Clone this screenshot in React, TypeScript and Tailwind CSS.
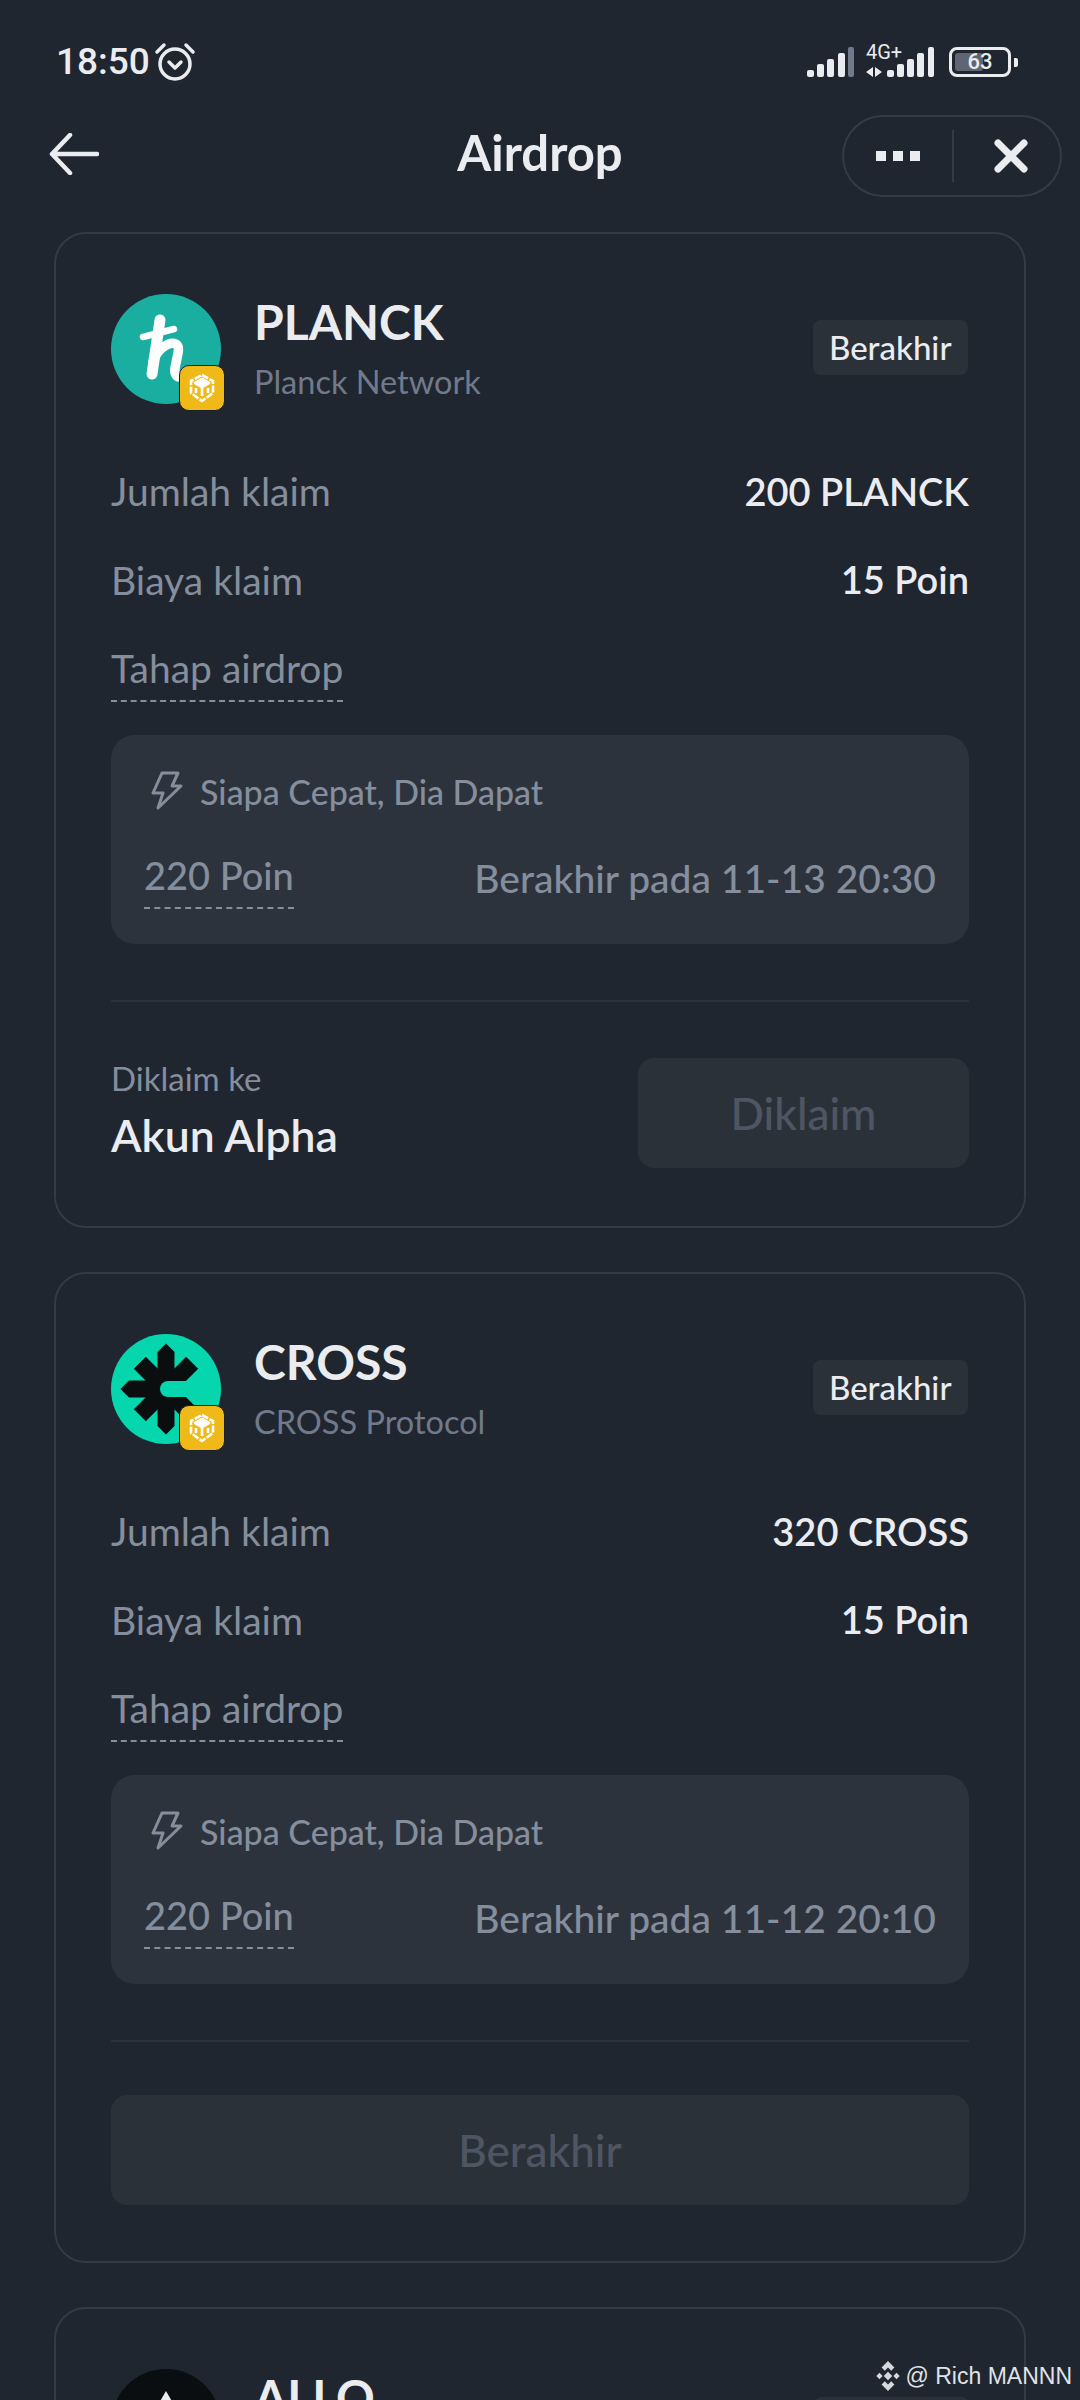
import React from "react";

function BnbBadge() {
  return (
    <div className="absolute left-[68px] top-[71px] flex h-[46px] w-[46px] items-center justify-center rounded-[10px] border border-[#1a1f27] bg-[#eeb919]">
      <svg width="28" height="30" viewBox="0 0 28 30" fill="none" stroke="#fff" strokeWidth="2.6" strokeLinejoin="round">
        <path d="M14 2 L25 8 V20 L14 28 L3 20 V8 Z" strokeDasharray="7 1.5" />
        <path d="M7 10 L14 14 L21 10 L14 6 Z" fill="#fff" />
        <path d="M14 14 V23" />
        <path d="M8 15 V20 M20 15 V20" />
      </svg>
    </div>
  );
}

function PlanckLogo() {
  return (
    <div className="relative h-[110px] w-[110px] shrink-0">
      <svg width="110" height="110" viewBox="0 0 110 110">
        <circle cx="55" cy="55" r="55" fill="#1aaea0" />
        <g fill="none" stroke="#fff" strokeLinecap="round" strokeLinejoin="round">
          <path d="M49 26 L41 80" strokeWidth="11" />
          <path d="M32 43 L63 35" strokeWidth="6.5" />
          <path d="M42 68 C46 55 58 47 65 50 C70 53 66 62 64 74 C63 81 66 84 72 83" strokeWidth="9.5" />
        </g>
      </svg>
      <BnbBadge />
    </div>
  );
}

function CrossLogo() {
  const arm = "-8.5,-37 0,-45.5 8.5,-37 8.5,0 -8.5,0";
  return (
    <div className="relative h-[110px] w-[110px] shrink-0">
      <svg width="110" height="110" viewBox="0 0 110 110">
        <circle cx="55" cy="55" r="55" fill="#06d6ae" />
        <g transform="translate(55 55)" fill="#0b0e0f">
          <polygon points={arm} />
          <polygon points={arm} transform="rotate(180)" />
          <polygon points={arm} transform="rotate(270)" />
          <rect x="-8.5" y="-37" width="17" height="37" transform="rotate(45)" />
          <rect x="-8.5" y="-37" width="17" height="37" transform="rotate(135)" />
          <rect x="-8.5" y="-37" width="17" height="37" transform="rotate(225)" />
          <rect x="-8.5" y="-37" width="17" height="37" transform="rotate(315)" />
          <circle cx="0" cy="0" r="13" />
          <rect x="-6" y="-8" width="60" height="16" rx="8" fill="#06d6ae" />
        </g>
      </svg>
      <BnbBadge />
    </div>
  );
}

function Row({ label, value }: { label: string; value: string }) {
  return (
    <div className="flex h-[88.5px] items-center justify-between text-[39px]">
      <span className="text-[#848e9c]">{label}</span>
      <span className="text-[38px] font-semibold text-[#eaecef]">{value}</span>
    </div>
  );
}

function Dash() {
  return <div className="h-0 border-t-2 border-dashed border-[#848e9c]" />;
}

function Bolt() {
  return (
    <svg width="34" height="40" viewBox="0 0 34 40" fill="none" stroke="#848e9c" strokeWidth="3" strokeLinejoin="round" strokeLinecap="round">
      <path d="M12 2 H28 L22 15 H31 L8 37 L13 22 H3 Z" />
    </svg>
  );
}

type CardProps = {
  logo: React.ReactNode;
  symbol: string;
  name: string;
  amount: string;
  date: string;
  footer: React.ReactNode;
};

function Card({ logo, symbol, name, amount, date, footer }: CardProps) {
  return (
    <div className="rounded-[32px] border-2 border-[#333b47] px-[55px] pt-[60px] pb-[58px]">
      <div className="flex h-[110px] items-center">
        {logo}
        <div className="ml-[33px] flex-1">
          <div className="mt-[-2px] text-[48px] leading-[56px] font-bold text-[#eaecef]">{symbol}</div>
          <div className="mt-[12px] text-[32.5px] leading-[40px] text-[#707a8a]">{name}</div>
        </div>
        <div className="mt-[-3px] mr-[1.5px] rounded-[8px] bg-[#2b3139] px-[16px] py-[8px] text-[33px] leading-[39px] font-medium text-[#eaecef]">Berakhir</div>
      </div>
      <div className="mt-[43px]">
        <Row label="Jumlah klaim" value={amount} />
        <Row label="Biaya klaim" value="15 Poin" />
      </div>
      <div className="mt-[20px] inline-block text-[39px] leading-[48px] text-[#848e9c]">
        <div className="pb-[8px]">Tahap airdrop</div>
        <Dash />
      </div>
      <div className="mt-[33px] h-[209px] rounded-[24px] bg-[#2d333d] px-[33px] pt-[32px]">
        <div className="flex h-[48px] items-center gap-[16px] text-[34px] font-medium text-[#848e9c]">
          <span className="ml-[6px]"><Bolt /></span>
          Siapa Cepat, Dia Dapat
        </div>
        <div className="mt-[32px] flex items-start justify-between text-[39px] font-medium text-[#848e9c]">
          <div className="text-[38px] leading-[56px]">
            <div className="pb-[4px]">220 Poin</div>
            <Dash />
          </div>
          <div className="mt-[3px] leading-[56px]">Berakhir pada {date}</div>
        </div>
      </div>
      <div className="mt-[56px] mb-[55px] h-[2px] bg-[#2b3139]" />
      {footer}
    </div>
  );
}

export default function App() {
  return (
    <div className="relative h-[2400px] w-[1080px] overflow-hidden bg-[#202630] font-['Lato',sans-serif]">
      {/* status bar */}
      <div className="flex h-[100px] items-center pt-[24px] pr-[62px] pl-[56px] text-[#eaecef]">
        <span className="font-['Roboto',sans-serif] text-[37px] font-medium">18:50</span>
        <svg className="ml-[4px]" width="42" height="40" viewBox="0 0 42 40" fill="none" stroke="#eaecef" strokeWidth="3.5" strokeLinecap="round" strokeLinejoin="round">
          <circle cx="21" cy="22" r="15" />
          <path d="M15 20 L21 26 L27 20" />
          <path d="M3 10 L10 3 M39 10 L32 3" />
        </svg>
        <div className="flex-1" />
        <div className="relative h-[32px] w-[127px]">
          <svg width="127" height="32" viewBox="0 0 127 32" fill="#eaecef">
            <rect x="0" y="24" width="7" height="7" rx="2" />
            <rect x="10" y="18" width="7" height="13" rx="2" />
            <rect x="20" y="13" width="7" height="18" rx="2" />
            <rect x="31" y="7" width="7" height="24" rx="2" />
            <rect x="41" y="1" width="6" height="30" rx="2" fill="#707a8a" />
            <rect x="80" y="24" width="7" height="7" rx="2" />
            <rect x="90" y="18" width="7" height="13" rx="2" />
            <rect x="100" y="13" width="7" height="18" rx="2" />
            <rect x="110" y="7" width="7" height="24" rx="2" />
            <rect x="121" y="1" width="6" height="30" rx="2" />
            <path d="M66 21 v10 l-7 -5 Z M68 31 v-10 l7 5 Z" />
          </svg>
          <span className="absolute top-[-4px] left-[59px] font-['Roboto',sans-serif] text-[20px] leading-[20px]">4G+</span>
        </div>
        <div className="relative ml-[15px] flex h-[30px] w-[62px] items-center justify-center rounded-[8px] border-[3px] border-[#eaecef]">
          <div className="absolute top-[3px] bottom-[3px] left-[3px] w-[28px] rounded-[3px] bg-[#5e6673]" />
          <span className="relative font-['Roboto',sans-serif] text-[22px] leading-none font-medium">63</span>
        </div>
        <div className="ml-[3px] h-[9px] w-[4px] rounded-r-[2px] bg-[#eaecef]" />
      </div>

      {/* header */}
      <div className="relative flex h-[132px] items-start pr-[18px] pl-[49px]">
        <svg className="mt-[33px]" width="50" height="42" viewBox="0 0 50 42" fill="none" stroke="#eaecef" strokeWidth="4.5" strokeLinecap="round" strokeLinejoin="round">
          <path d="M48 21 H3 M21 2 L3 21 L21 40" />
        </svg>
        <div className="absolute top-[24px] right-0 left-0 text-center text-[49px] leading-[56px] font-bold text-[#eaecef]">Airdrop</div>
        <div className="mt-[15px] ml-auto flex h-[82px] w-[220px] items-center rounded-full border-2 border-[#333b47]">
          <div className="ml-[32px] flex gap-[7px]">
            <div className="h-[10px] w-[10px] bg-[#eaecef]" />
            <div className="h-[10px] w-[10px] bg-[#eaecef]" />
            <div className="h-[10px] w-[10px] bg-[#eaecef]" />
          </div>
          <div className="ml-[32px] h-[52px] w-[2px] bg-[#333b47]" />
          <svg className="ml-[40px]" width="34" height="34" viewBox="0 0 34 34" stroke="#eaecef" strokeWidth="7" strokeLinecap="round">
            <path d="M4 4 L30 30 M30 4 L4 30" />
          </svg>
        </div>
      </div>

      {/* cards */}
      <div className="mx-[54px] flex flex-col gap-[44px]">
        <Card
          logo={<PlanckLogo />}
          symbol="PLANCK"
          name="Planck Network"
          amount="200 PLANCK"
          date="11-13 20:30"
          footer={
            <div className="flex items-center justify-between">
              <div className="pb-[7px]">
                <div className="text-[33px] leading-[42px] text-[#848e9c]">Diklaim ke</div>
                <div className="mt-[10px] text-[44.5px] leading-[52px] font-semibold text-[#eaecef]">Akun Alpha</div>
              </div>
              <div className="flex h-[110px] w-[331px] items-center justify-center rounded-[16px] bg-[#2b3139] text-[44px] font-medium text-[#4f5663]">Diklaim</div>
            </div>
          }
        />
        <Card
          logo={<CrossLogo />}
          symbol="CROSS"
          name="CROSS Protocol"
          amount="320 CROSS"
          date="11-12 20:10"
          footer={
            <div className="mt-[-2px] mb-[-2px] flex h-[110px] items-center justify-center rounded-[16px] bg-[#2b3139] text-[44px] font-medium text-[#4f5663]">Berakhir</div>
          }
        />
        <div className="h-[400px] rounded-[32px] border-2 border-[#333b47] px-[55px] pt-[60px]">
          <div className="flex h-[110px] items-center">
            <svg width="110" height="110" viewBox="0 0 110 110" className="shrink-0">
              <circle cx="55" cy="55" r="55" fill="#0b0e11" />
              <path d="M55 22 L84 72 H26 Z" fill="#eaecef" />
            </svg>
            <div className="ml-[33px] flex-1 self-start text-[48px] leading-[56px] font-bold text-[#eaecef]">ALLO</div>
            <div className="mt-[28px] h-[60px] w-[155px] self-start rounded-[8px] bg-[#2b3139]" />
          </div>
        </div>
      </div>

      {/* watermark */}
      <div className="absolute top-[2359px] right-[8px] flex items-center gap-[3px] font-['Liberation_Sans',sans-serif] text-[23px] text-[#dfe2e6]">
        <svg width="30" height="32" viewBox="0 0 28 30" fill="#d5d8dc">
          <path d="M14 1 L20 7 L17 10 L14 7 L11 10 L8 7 Z M14 29 L20 23 L17 20 L14 23 L11 20 L8 23 Z M3 15 L6 12 L9 15 L6 18 Z M25 15 L22 12 L19 15 L22 18 Z M14 11 L18 15 L14 19 L10 15 Z" />
        </svg>
        @ Rich MANNN
      </div>
    </div>
  );
}
